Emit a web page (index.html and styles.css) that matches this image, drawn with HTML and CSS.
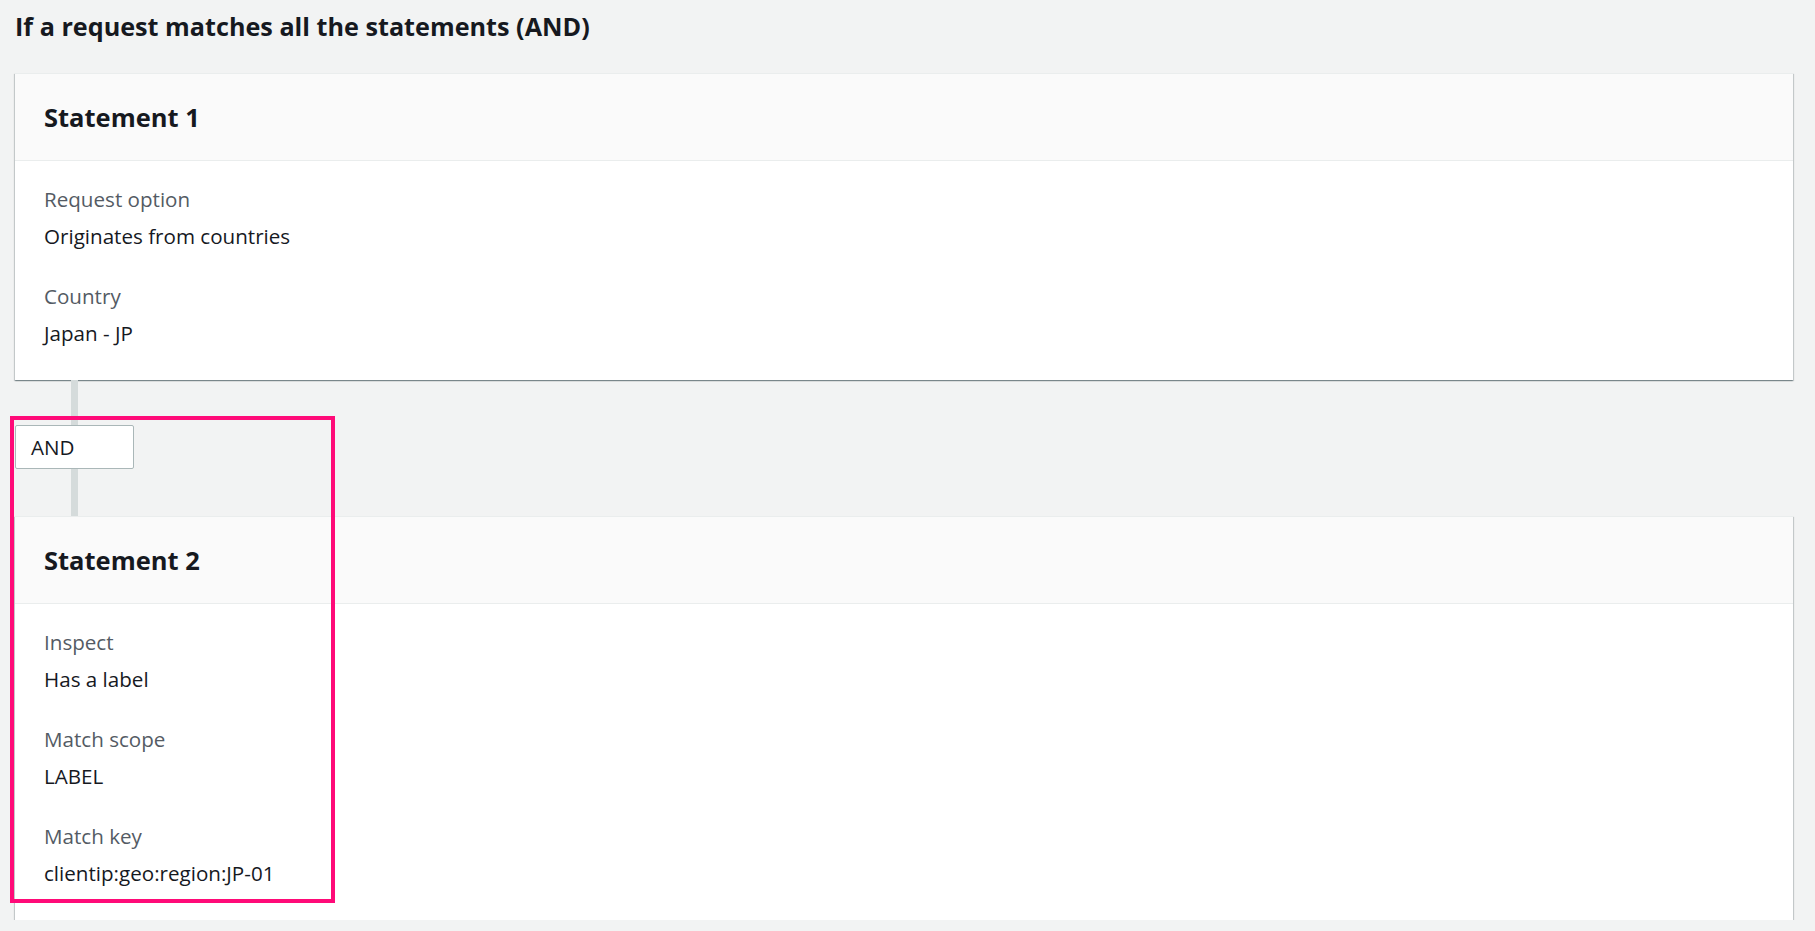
FILE: index.html
```html
<!DOCTYPE html>
<html lang="en">
<head>
<meta charset="utf-8">
<title>Rule statements</title>
<link rel="stylesheet" href="styles.css">
</head>
<body>
<div class="page">
  <h2 class="page-title">If a request matches all the statements (AND)</h2>

  <section class="card">
    <header class="card-header"><h3>Statement 1</h3></header>
    <div class="card-body">
      <div class="field">
        <div class="field-label">Request option</div>
        <div class="field-value">Originates from countries</div>
      </div>
      <div class="field">
        <div class="field-label">Country</div>
        <div class="field-value">Japan - JP</div>
      </div>
    </div>
  </section>

  <div class="connector">
    <div class="connector-line top"></div>
    <div class="operator">AND</div>
    <div class="connector-line bottom"></div>
  </div>

  <section class="card">
    <header class="card-header"><h3>Statement 2</h3></header>
    <div class="card-body">
      <div class="field">
        <div class="field-label">Inspect</div>
        <div class="field-value">Has a label</div>
      </div>
      <div class="field">
        <div class="field-label">Match scope</div>
        <div class="field-value">LABEL</div>
      </div>
      <div class="field">
        <div class="field-label">Match key</div>
        <div class="field-value">clientip:geo:region:JP-01</div>
      </div>
    </div>
  </section>

  <div class="highlight"></div>
</div>
</body>
</html>
```

FILE: styles.css
```css
* { box-sizing: border-box; }

html, body {
  margin: 0;
  padding: 0;
  background: #f2f3f3;
}

body {
  font-family: "Open Sans", "Noto Sans", sans-serif;
  color: #16191f;
  font-size: 20.6px;
  line-height: 30px;
}

.page {
  position: relative;
  padding: 11px 22px 0 15px;
}

.page-title {
  margin: 0 0 32px 0;
  font-size: 25.2px;
  line-height: 30px;
  font-weight: 700;
  color: #16191f;
}

.card {
  background: #ffffff;
  border-top: 1px solid #eaeded;
  box-shadow: 0 1px 1px 0 rgba(0, 28, 36, 0.3),
              1px 1px 1px 0 rgba(0, 28, 36, 0.15),
              -1px 1px 1px 0 rgba(0, 28, 36, 0.15);
}

.card-header {
  background: #fafafa;
  border-bottom: 1px solid #eaeded;
  padding: 28px 29px 28px 29px;
}

.card-header h3 {
  margin: 0;
  font-size: 25.5px;
  line-height: 30px;
  font-weight: 700;
  color: #16191f;
}

.card-body {
  padding: 23px 29px 32px 29px;
  display: flex;
  flex-direction: column;
  gap: 30px;
}

.field {
  display: flex;
  flex-direction: column;
  gap: 7px;
}

.field-label {
  color: #545b64;
}

.field-value {
  color: #16191f;
}

.connector {
  display: flex;
  flex-direction: column;
  align-items: flex-start;
}

.connector-line {
  width: 7px;
  margin-left: 56px;
  background: #d5dbdb;
}

.connector-line.top { height: 45px; }
.connector-line.bottom { height: 47px; }

.operator {
  width: 119px;
  height: 44px;
  padding: 6px 15px;
  background: #ffffff;
  border: 1px solid #aab7b8;
  border-radius: 2px;
  color: #16191f;
}

.highlight {
  position: absolute;
  left: 10px;
  top: 416px;
  width: 325px;
  height: 487px;
  border: 4px solid #ff0a78;
  pointer-events: none;
}
```
